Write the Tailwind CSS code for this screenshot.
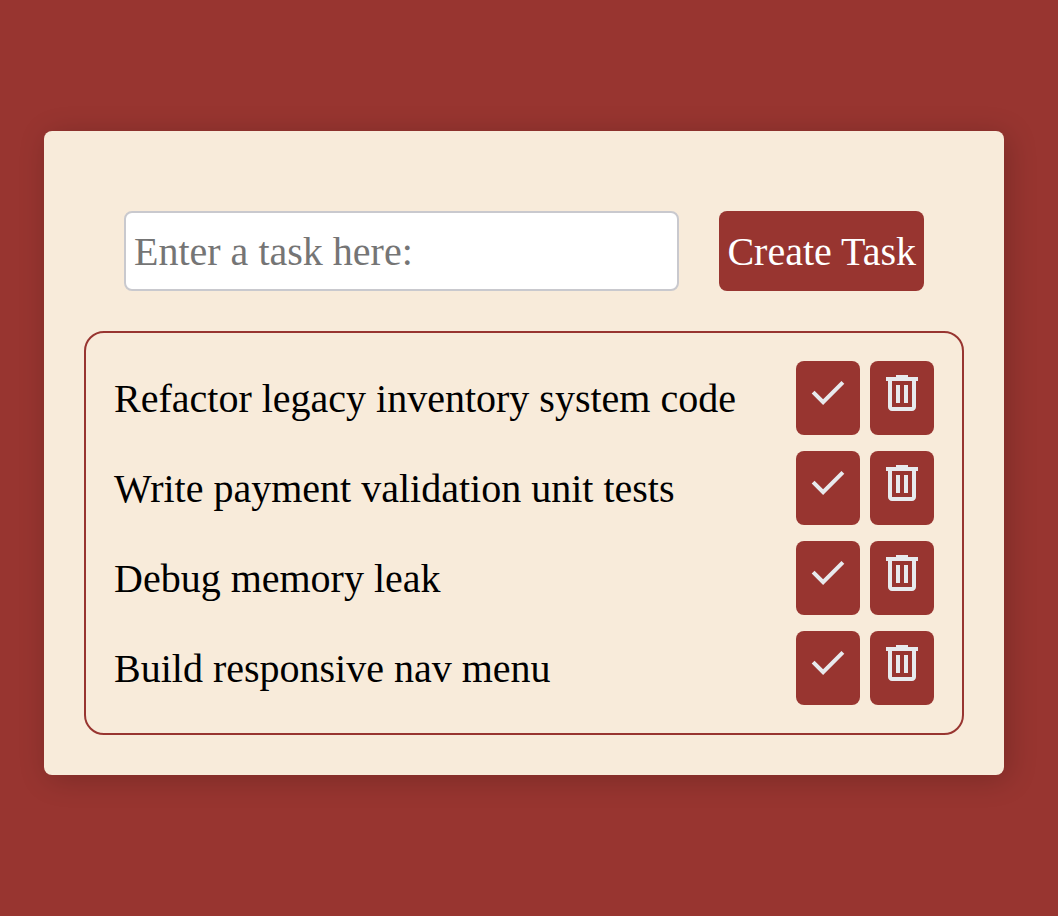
<!DOCTYPE html>
<html lang="en">
<head>
<meta charset="utf-8">
<meta name="viewport" content="width=device-width, initial-scale=1">
<title>Tasks</title>
<script src="https://cdn.jsdelivr.net/npm/@tailwindcss/browser@4"></script>
</head>
<body class="flex min-h-screen items-center bg-[#983530] pr-[54px] pb-[10px] pl-11 font-['Liberation_Serif',serif] text-[40px] leading-[47px] text-black">
<svg class="hidden" aria-hidden="true">
  <symbol id="check" viewBox="0 -960 960 960"><path d="M382-240 154-468l57-57 171 171 367-367 57 57-424 424Z"/></symbol>
  <symbol id="trash" viewBox="0 -960 960 960"><path d="M280-120q-33 0-56.5-23.5T200-200v-520h-40v-80h200v-40h240v40h200v80h-40v520q0 33-23.5 56.5T680-120H280Zm400-600H280v520h400v-520ZM360-280h80v-360h-80v360Zm160 0h80v-360h-80v360Z"/></symbol>
</svg>
<main class="w-full rounded-lg bg-[#f8ebda] p-10 shadow-[4px_4px_30px_rgba(0,0,0,0.2)]">
  <form class="flex gap-10 p-10">
    <input type="text" aria-label="Task" placeholder="Enter a task here:" class="h-20 min-w-0 flex-1 rounded-lg border-2 border-[#c9c9ce] bg-white px-2 placeholder:text-[#757575]">
    <button type="button" class="h-20 shrink-0 rounded-lg bg-[#983530] px-2 text-white">Create Task</button>
  </form>
  <ul class="flex flex-col gap-4 rounded-[20px] border-2 border-[#983530] p-7">
    <li class="flex items-center gap-[10px]">
      <span class="flex-1">Refactor legacy inventory system code</span>
      <button type="button" aria-label="Complete task" class="h-[74px] rounded-lg bg-[#983530] px-2 pt-2 pb-[18px]"><svg class="size-12 fill-[#e8eaed]"><use href="#check"/></svg></button>
      <button type="button" aria-label="Delete task" class="h-[74px] rounded-lg bg-[#983530] px-2 pt-2 pb-[18px]"><svg class="size-12 fill-[#e8eaed]"><use href="#trash"/></svg></button>
    </li>
    <li class="flex items-center gap-[10px]">
      <span class="flex-1">Write payment validation unit tests</span>
      <button type="button" aria-label="Complete task" class="h-[74px] rounded-lg bg-[#983530] px-2 pt-2 pb-[18px]"><svg class="size-12 fill-[#e8eaed]"><use href="#check"/></svg></button>
      <button type="button" aria-label="Delete task" class="h-[74px] rounded-lg bg-[#983530] px-2 pt-2 pb-[18px]"><svg class="size-12 fill-[#e8eaed]"><use href="#trash"/></svg></button>
    </li>
    <li class="flex items-center gap-[10px]">
      <span class="flex-1">Debug memory leak</span>
      <button type="button" aria-label="Complete task" class="h-[74px] rounded-lg bg-[#983530] px-2 pt-2 pb-[18px]"><svg class="size-12 fill-[#e8eaed]"><use href="#check"/></svg></button>
      <button type="button" aria-label="Delete task" class="h-[74px] rounded-lg bg-[#983530] px-2 pt-2 pb-[18px]"><svg class="size-12 fill-[#e8eaed]"><use href="#trash"/></svg></button>
    </li>
    <li class="flex items-center gap-[10px]">
      <span class="flex-1">Build responsive nav menu</span>
      <button type="button" aria-label="Complete task" class="h-[74px] rounded-lg bg-[#983530] px-2 pt-2 pb-[18px]"><svg class="size-12 fill-[#e8eaed]"><use href="#check"/></svg></button>
      <button type="button" aria-label="Delete task" class="h-[74px] rounded-lg bg-[#983530] px-2 pt-2 pb-[18px]"><svg class="size-12 fill-[#e8eaed]"><use href="#trash"/></svg></button>
    </li>
  </ul>
</main>
</body>
</html>
